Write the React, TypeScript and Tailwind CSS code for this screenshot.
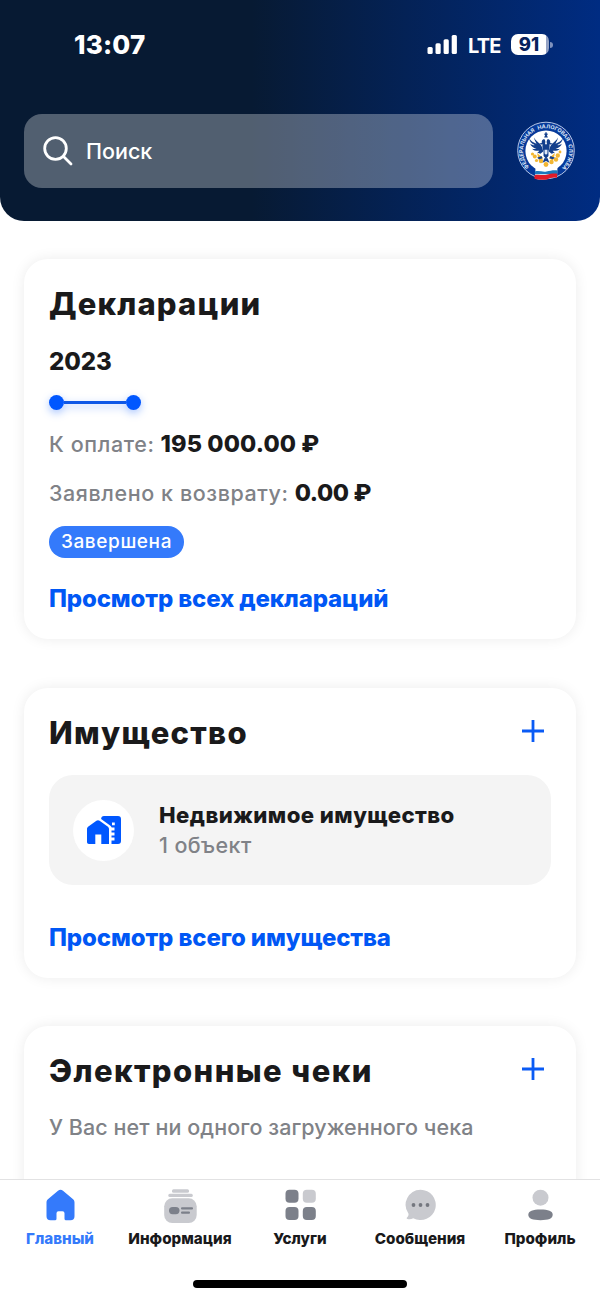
import React from 'react';
import clsx from 'clsx';

interface CardProps {
  title: string;
  titleClassName?: string;
  canAdd?: boolean;
  className?: string;
  children: React.ReactNode;
}

interface TabProps {
  label: string;
  active?: boolean;
  children: React.ReactNode;
}

function TaxServiceLogo() {
  return (
    <svg className="h-[60px] w-[60px]" viewBox="0 0 60 60">
      <defs>
        <path id="ring" d="M13.6 46.4 A23 23 0 1 1 46.4 46.4" />
      </defs>
      <circle cx="30" cy="29.5" r="28.3" fill="#06399a" stroke="#c9d6ee" strokeWidth="0.9" />
      <circle cx="30" cy="30" r="20.6" fill="#fff" />
      <text fill="#dbe5f6" fontSize="5.4" fontWeight="700" fontFamily="Inter, sans-serif" wordSpacing="2">
        <textPath href="#ring" startOffset="0.5" textLength="107.5" lengthAdjust="spacing">
          ФЕДЕРАЛЬНАЯ НАЛОГОВАЯ СЛУЖБА
        </textPath>
      </text>
      {/* Branches */}
      <g fill="#f2b632">
        <circle cx="16.5" cy="33" r="1.6" />
        <circle cx="18.8" cy="35.500" r="2" />
        <circle cx="20.500" cy="39.500" r="1.600" />
        <circle cx="25" cy="40" r="2.200" />
        <circle cx="30" cy="43.500" r="2.400" />
        <circle cx="35.500" cy="41" r="2.200" />
        <circle cx="40" cy="38.500" r="2.200" />
        <circle cx="41.800" cy="34.500" r="2.200" />
        <circle cx="44" cy="31" r="1.400" />
        <path d="M21 32l6 5-4 3zM39 32l-6 5 4 3z" />
      </g>
      {/* Eagle */}
      <g transform="translate(-3.6 -3.1) scale(1.120)">
        <g fill="#143f8c">
          <path d="M28.6 14h.8v-1.200h1.200v1.200h.8v1.200h-.7l1 2.200h-3.400l1-2.200h-.7z" />
          <path d="M29 31c-2-2-2.500-5-2.100-7.500-1 .4-2 .2-2.700-.6l2-.4c-.2-2 .5-3.600 2.200-3.700 1.300 1.300 1.200 3 .7 4.700h1.800c-.5-1.700-.6-3.400.7-4.700 1.700.1 2.400 1.700 2.200 3.700l2 .4c-.7.8-1.700 1-2.700.6.4 2.500-.1 5.500-2.100 7.500z" />
          <path d="M15 18c1.500 3 4 4.200 6.500 5-1-2-2-3.500-2.200-5.500 1.300 2.500 3.500 4 5.200 5.500 1.500 1.500 2.600 4 3 7l-2.500 2-3-1c1-.7 1.700-1 2-1.700-2.500.3-4.800-.1-6.500-1.800 1.600.3 3 .2 4-.2-3-.6-5-2-5.600-4.300 1.500 1 3 1.400 4 1.300-2.900-1.300-4.800-3.300-4.900-6.300z" />
          <path d="M45 18c-1.500 3-4 4.200-6.500 5 1-2 2-3.500 2.200-5.500-1.300 2.500-3.500 4-5.200 5.500-1.500 1.500-2.600 4-3 7l2.500 2 3-1c-1-.7-1.700-1-2-1.700 2.500.3 4.800-.1 6.500-1.800-1.600.3-3 .2-4-.2 3-.6 5-2 5.600-4.300-1.500 1-3 1.400-4 1.300 2.900-1.300 4.800-3.300 4.900-6.300z" />
          <path d="M27.8 29h4.400v5l-2.200 2.500-2.200-2.500zM28.500 36h3l1.500 4-3-1.500-3 1.500zM22 35.500l4-1.500 1 2-3 1zM38 35.500l-4-1.500-1 2 3 1z" />
        </g>
        <path d="M28.700 28.500h2.600v3.200l-1.300 1.300-1.300-1.300z" fill="#dfe8f7" />
      </g>
      {/* Flag */}
      <path d="M19.500 46.500c4-2 7 1 11 0s7-1.500 11-.8l-.5 11c-4-1-7 0-10 1.300s-8 .8-12-.3z" fill="#fff" />
      <path d="M19 50.500c4-1.300 7.500.8 11.500 0s7-1.600 11-1l-.3 3.800H18.700z" fill="#1c79bd" />
      <path d="M18.500 54.200c4-1.300 8 .5 12-.5s7-1.600 10.700-1l-.2 4.300c-3.500-1.200-6.500 0-9.500 1.200s-9 .6-13-.5z" fill="#e31b28" />
    </svg>
  );
}

function StatusBar() {
  return (
    <div className="flex h-7 items-center justify-between pl-[74px] pr-[47px] text-white">
      <span className="text-[26px] font-extrabold leading-7 tracking-[0.2px]">13:07</span>
      <div className="flex items-center">
        <svg className="mb-[2px] h-[19px] w-[30px]" viewBox="0 0 30 19" fill="#fff">
          <rect x="0.5" y="12" width="5.2" height="7" rx="1.5" />
          <rect x="8.5" y="8.2" width="5.2" height="10.8" rx="1.5" />
          <rect x="16.6" y="4.2" width="5.2" height="14.8" rx="1.5" />
          <rect x="24.7" y="0" width="5.2" height="19" rx="1.5" />
        </svg>
        <span className="ml-[11px] w-8 whitespace-nowrap pt-px text-[20px] font-bold leading-7 tracking-[-0.8px]">LTE</span>
        <div className="mb-px ml-[11px] flex items-center">
          <div className="flex h-[21px] w-[38px] items-center justify-center overflow-hidden rounded-[7px] bg-linear-to-r from-white from-92% to-[#94a2c4] to-92% pr-[2px] text-[18.5px] font-extrabold leading-[21px] text-[#07225c]">
            91
          </div>
          <div className="ml-[1px] h-[6px] w-[3px] rounded-r-full bg-[#7f92bd]" />
        </div>
      </div>
    </div>
  );
}

function Card({ title, titleClassName, canAdd, className, children }: CardProps) {
  return (
    <section
      className={clsx(
        'shrink-0 rounded-[24px] bg-white px-[25px] pt-6 shadow-[0_0_14px_rgba(0,0,0,0.08)]',
        className
      )}
    >
      <div className="flex h-10 items-center justify-between">
        <h2 className={clsx('whitespace-nowrap pt-px text-[31px] font-extrabold leading-10', titleClassName)}>{title}</h2>
        {canAdd && (
          <svg className="mr-[7px] mb-[2px] h-[22px] w-[22px]" viewBox="0 0 22 22" stroke="#0a5bf5" strokeWidth="2.8">
            <path d="M11 0v22M0 11h22" />
          </svg>
        )}
      </div>
      {children}
    </section>
  );
}

function Tab({ label, active, children }: TabProps) {
  return (
    <button className="flex w-[120px] flex-col items-center pt-[9px]">
      <svg className="h-[34px] w-[34px]" viewBox="0 0 34 34">
        {children}
      </svg>
      <span
        className={clsx(
          'mt-[6px] whitespace-nowrap text-[15.2px] font-extrabold leading-5',
          active ? 'text-[#347afb]' : 'text-[#19191b]'
        )}
      >
        {label}
      </span>
    </button>
  );
}

export default function App() {
  return (
    <div className="flex h-[1300px] w-[600px] flex-col overflow-hidden bg-white font-['Inter',sans-serif] text-[#1a1a1b]">
      <header className="h-[221px] shrink-0 rounded-b-[24px] bg-[linear-gradient(90deg,#071a33_42%,#002c82_100%)] pt-[31px]">
        <StatusBar />
        <div className="mt-[55px] flex items-center px-6">
          <div className="flex h-[73.5px] w-[469px] items-center rounded-[18px] bg-white/30 pl-[19px] text-white">
            <svg className="h-[30px] w-[30px]" viewBox="0 0 30 30" fill="none" stroke="#fff" strokeWidth="2.8" strokeLinecap="round">
              <circle cx="12.5" cy="12.5" r="10.8" />
              <path d="M20.5 20.5l7.5 7.5" />
            </svg>
            <span className="ml-[13px] text-[21.5px] font-medium leading-7">Поиск</span>
          </div>
          <div className="ml-[23px]">
            <TaxServiceLogo />
          </div>
        </div>
      </header>

      <main className="flex min-h-0 flex-1 flex-col overflow-hidden px-6 pt-[38px]">
        <Card title="Декларации" titleClassName="tracking-[1.15px]" className="h-[380px]">
          <p className="mt-6 text-[24px] font-extrabold leading-[30px] tracking-[-0.1px]">2023</p>
          <div className="mt-[17px] flex h-4 w-[92px] items-center drop-shadow-[0_3px_4px_rgba(0,87,255,0.35)]">
            <span className="h-[15px] w-[15px] rounded-full bg-[#0057ff]" />
            <span className="h-[3px] flex-1 bg-[#0f58e6]" />
            <span className="h-[15px] w-[15px] rounded-full bg-[#0057ff]" />
          </div>
          <p className="mt-[19px] flex items-center whitespace-nowrap leading-[30px]">
            <span className="text-[21.5px] font-medium tracking-[0.6px] text-[#808287]">К оплате:</span>
            <span className="ml-[6px] text-[23.5px] font-extrabold tracking-[0.1px]">195 000.00 ₽</span>
          </p>
          <p className="mt-[19px] flex items-center whitespace-nowrap leading-[30px]">
            <span className="text-[21.5px] font-medium tracking-[0.58px] text-[#808287]">Заявлено к возврату:</span>
            <span className="ml-[6px] text-[23.5px] font-extrabold tracking-[-0.4px]">0.00 ₽</span>
          </p>
          <div className="mt-[18px] flex h-8 w-[135px] items-center justify-center rounded-full bg-[#347afb] pt-px text-[19px] font-medium tracking-[0.6px] text-white">
            Завершена
          </div>
          <a className="mt-[26px] block whitespace-nowrap text-[24px] font-extrabold leading-[30px] tracking-[-0.14px] text-[#0057f5]">
            Просмотр всех деклараций
          </a>
        </Card>

        <Card title="Имущество" titleClassName="tracking-[1.3px]" canAdd className="mt-[49px] h-[290px]">
          <div className="mt-[23px] flex h-[110px] items-center rounded-[24px] bg-[#f4f4f4] pl-6">
            <div className="flex h-[61px] w-[61px] items-center justify-center rounded-full bg-white">
              <svg className="h-7 w-[34px]" viewBox="0 0 34 28" fill="#0057ff">
                <path d="M0 13.2c0-1.2.5-2 1.4-2.700l8-5.700c1-.7 2.200-.7 3.200 0l8 5.700c.9.7 1.400 1.500 1.400 2.700V28h-7.700v-9.500H8.300V28H2c-1.200 0-2-.8-2-2z" />
                <path
                  fillRule="evenodd"
                  d="M17 0h14a3 3 0 0 1 3 3v22a3 3 0 0 1-3 3h-6.500v-3.500h3v-3h-3v-2h3v-3h-3v-2h3v-3h-2.800c-.3-.9-.8-1.500-1.600-2.100l-9-6.400C14.200 1 15.300 0 17 0zM25 6.500v2.800h2.800V6.500z"
                />
              </svg>
            </div>
            <div className="ml-[25px] whitespace-nowrap">
              <p className="text-[22.2px] font-extrabold leading-[30px] tracking-[0.42px]">Недвижимое имущество</p>
              <p className="text-[21.5px] font-medium leading-[30px] tracking-[0.4px] text-[#808287]">1 объект</p>
            </div>
          </div>
          <a className="mt-[38px] block whitespace-nowrap text-[24px] font-extrabold leading-[30px] tracking-[-0.12px] text-[#0057f5]">
            Просмотр всего имущества
          </a>
        </Card>

        <Card title="Электронные чеки" titleClassName="tracking-[1.4px]" canAdd className="mt-12 h-[290px]">
          <p className="mt-[22px] whitespace-nowrap text-[21.5px] font-medium leading-[30px] tracking-[0.07px] text-[#808287]">
            У Вас нет ни одного загруженного чека
          </p>
        </Card>
      </main>

      <nav className="flex h-[121px] shrink-0 flex-col items-center border-t border-[#e2e2e3] bg-white">
        <div className="flex h-[100px] w-full">
          <Tab label="Главный" active>
            <path
              d="M3.500 13.500c0-1.600.5-2.600 1.700-3.600l9.800-8.200c1.700-1.400 3.300-1.400 5 0l9.800 8.200c1.200 1 1.700 2 1.700 3.600v13.700a4 4 0 0 1-4 4h-4.500a1.500 1.500 0 0 1-1.500-1.500v-5.500a2 2 0 0 0-2-2h-4a2 2 0 0 0-2 2v5.500a1.500 1.500 0 0 1-1.500 1.500H7.500a4 4 0 0 1-4-4z"
              fill="#347afb"
            />
          </Tab>
          <Tab label="Информация">
            <g fill="#c9cacf">
              <rect x="9" y="0.3" width="17" height="3.4" rx="1.5" />
              <rect x="5.3" y="4.7" width="24.5" height="3.3" rx="1.5" />
              <rect x="1.2" y="9.3" width="32.5" height="24.7" rx="8" />
            </g>
            <g fill="#7c808a">
              <rect x="6" y="18" width="10.5" height="7.2" rx="3.6" />
              <rect x="18" y="18.2" width="12" height="2.2" rx="1" />
              <rect x="18" y="22.6" width="9" height="2.2" rx="1" />
            </g>
          </Tab>
          <Tab label="Услуги">
            <rect x="2.5" y="0.7" width="13" height="13" rx="4" fill="#7c808a" />
            <rect x="19.8" y="0.7" width="13" height="13" rx="4" fill="#c9cacf" />
            <rect x="2.5" y="18" width="13" height="13" rx="4" fill="#7c808a" />
            <rect x="19.8" y="18" width="13" height="13" rx="4" fill="#7c808a" />
          </Tab>
          <Tab label="Сообщения">
            <path
              d="M17.500.7a15.200 15.200 0 1 1-7.300 28.500c-1.800 1-3.800 1.200-5.700.7-.9-.2-1.100-.9-.4-1.500 1-.9 1.600-2.100 1.400-3.700A15.200 15.200 0 0 1 17.500.7z"
              fill="#c9cacf"
            />
            <g fill="#74777f">
              <circle cx="10.5" cy="16" r="1.9" />
              <circle cx="17.5" cy="16" r="1.9" />
              <circle cx="24.5" cy="16" r="1.9" />
            </g>
          </Tab>
          <Tab label="Профиль">
            <circle cx="17.5" cy="8.7" r="8" fill="#c9cacf" />
            <path d="M5.300 25.800c0-3.800 4.500-5.300 12.200-5.300s12.200 1.500 12.200 5.300-4.500 5.400-12.200 5.400-12.200-1.600-12.200-5.400z" fill="#7c808a" />
          </Tab>
        </div>
        <div className="h-[8px] w-[214px] rounded-full bg-black" />
      </nav>
    </div>
  );
}
